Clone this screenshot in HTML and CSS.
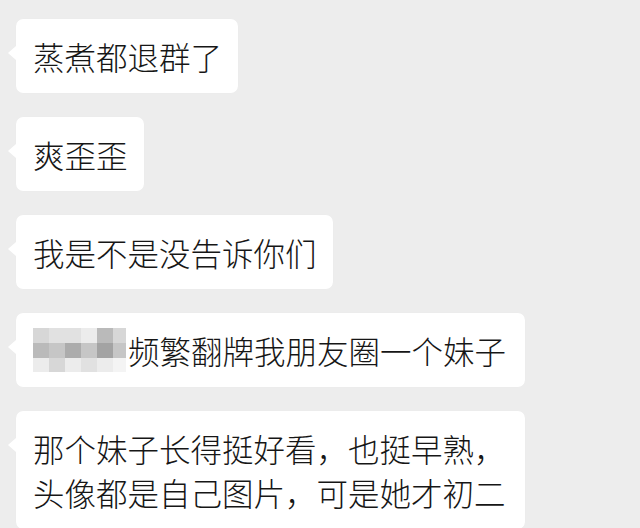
FILE: index.html
```html
<!DOCTYPE html>
<html lang="zh-CN">
<head>
    <meta charset="UTF-8">
    <meta name="viewport" content="width=device-width, initial-scale=1.0">
    <title>聊天记录</title>
    <link rel="stylesheet" href="styles.css">
</head>
<body>
    <div class="chat">
        <div class="bubble">蒸煮都退群了</div>
        <div class="bubble">爽歪歪</div>
        <div class="bubble">我是不是没告诉你们</div>
        <div class="bubble with-mosaic">
            <span class="mosaic" aria-hidden="true">
                <i class="s3"></i><i class="s2"></i><i class="s2"></i><i class="s1"></i><i class="s5"></i><i class="s3"></i>
                <i class="s5"></i><i class="s4"></i><i class="s6"></i><i class="s4"></i><i class="s7"></i><i class="s4"></i>
                <i class="s1"></i><i class="s3"></i><i class="s1"></i><i class="s2"></i><i class="s1"></i><i class="s0"></i>
            </span>频繁翻牌我朋友圈一个妹子
        </div>
        <div class="bubble wide">那个妹子长得挺好看，也挺早熟，<br>头像都是自己图片，可是她才初二</div>
    </div>
</body>
</html>
```

FILE: styles.css
```css
body {
    margin: 0;
    background-color: #ededed;
    font-family: "Noto Sans CJK SC", "Noto Sans", sans-serif;
    color: #161616;
}

.chat {
    display: flex;
    flex-direction: column;
    align-items: flex-start;
    gap: 24px;
    padding: 19px 0 0 16px;
}

.bubble {
    position: relative;
    background-color: #fff;
    border-radius: 7px;
    padding: 15px 16px 15px 17px;
    font-size: 31.5px;
    font-weight: 300;
    line-height: 44px;
    white-space: nowrap;
    box-shadow: 0 0 1px rgba(0, 0, 0, 0.04);
}

/* little tail on the left */
.bubble::before {
    content: "";
    position: absolute;
    left: -8px;
    top: 27px;
    border-style: solid;
    border-width: 7px 8px 7px 0;
    border-color: transparent #fff transparent transparent;
}

.with-mosaic {
    display: flex;
    align-items: center;
    padding-right: 19px;
}

.wide {
    padding-right: 19px;
}

.mosaic {
    display: grid;
    grid-template-columns: 16px 16px 16px 16px 16px 13px;
    grid-template-rows: 15px 15px 14px;
    width: 93px;
    margin-right: 2px;
}

.mosaic i { display: block; }
.s0 { background-color: #f4f4f4; }
.s1 { background-color: #ececec; }
.s2 { background-color: #e1e1e1; }
.s3 { background-color: #d7d7d7; }
.s4 { background-color: #c6c6c6; }
.s5 { background-color: #bababa; }
.s6 { background-color: #acacac; }
.s7 { background-color: #a3a3a3; }
```
